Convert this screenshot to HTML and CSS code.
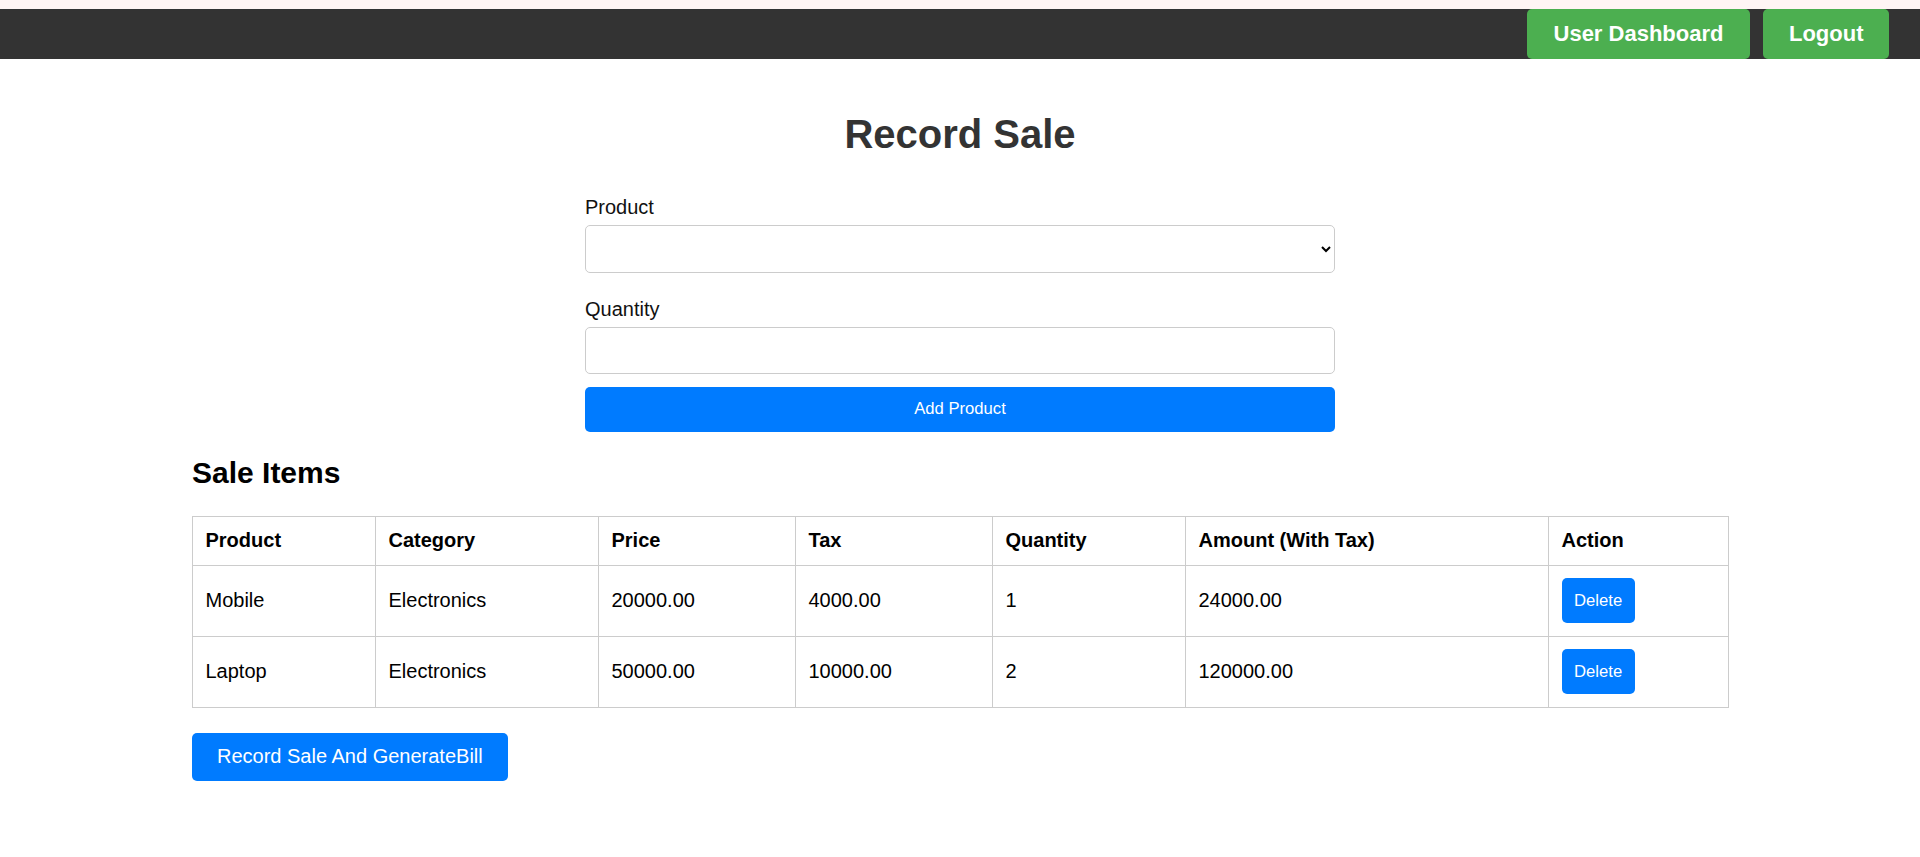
FILE: index.html
```html
<!DOCTYPE html>
<html lang="en">
<head>
<meta charset="utf-8">
<title>Record Sale</title>
<link rel="stylesheet" href="styles.css">
</head>
<body>
<div class="topstrip"></div>
<nav class="navbar">
  <div class="nav-actions">
    <a class="nav-btn" href="#">User Dashboard</a>
    <a class="nav-btn nav-btn-logout" href="#">Logout</a>
  </div>
</nav>
<main class="page">
  <h1 class="title">Record Sale</h1>
  <form class="sale-form">
    <div class="field">
      <label class="field-label">Product</label>
      <select class="control control-select"><option></option></select>
    </div>
    <div class="field field-last">
      <label class="field-label">Quantity</label>
      <input class="control control-input" type="text">
    </div>
    <button type="button" class="btn-add">Add Product</button>
  </form>
  <section class="items">
    <h2 class="items-title">Sale Items</h2>
    <table class="items-table">
      <colgroup>
        <col class="c1"><col class="c2"><col class="c3"><col class="c4"><col class="c5"><col class="c6"><col class="c7">
      </colgroup>
      <thead>
        <tr><th>Product</th><th>Category</th><th>Price</th><th>Tax</th><th>Quantity</th><th>Amount (With Tax)</th><th>Action</th></tr>
      </thead>
      <tbody>
        <tr><td>Mobile</td><td>Electronics</td><td>20000.00</td><td>4000.00</td><td>1</td><td>24000.00</td><td><button type="button" class="btn-delete">Delete</button></td></tr>
        <tr><td>Laptop</td><td>Electronics</td><td>50000.00</td><td>10000.00</td><td>2</td><td>120000.00</td><td><button type="button" class="btn-delete">Delete</button></td></tr>
      </tbody>
    </table>
    <button type="button" class="btn-record">Record Sale And GenerateBill</button>
  </section>
</main>
</body>
</html>
```
FILE: styles.css
```css
body {
  margin: 0;
  font-family: "Liberation Sans", Arial, sans-serif;
  font-size: 20px;
  color: #000;
  background: #fff;
}

.topstrip {
  height: 9px;
  background: #fff5f4;
}

.navbar {
  background: #333;
  height: 50px;
  display: flex;
  justify-content: flex-end;
  padding-right: 31px;
}

.nav-actions {
  display: flex;
  gap: 13px;
}

.nav-btn {
  display: flex;
  align-items: center;
  padding: 0 27px;
  background: #4caf50;
  color: #fff;
  font-weight: bold;
  font-size: 22px;
  border-radius: 5px;
  text-decoration: none;
}

.nav-btn-logout {
  padding: 0 25.5px;
}

.page {
  width: 1536px;
  margin: 0 auto;
}

.title {
  font-size: 40px;
  line-height: 46px;
  color: #333;
  text-align: center;
  margin: 52px 0 39px;
}

.sale-form {
  width: 750px;
  margin: 0 auto;
  display: flex;
  flex-direction: column;
}

.field {
  display: flex;
  flex-direction: column;
  gap: 6px;
  margin-bottom: 25px;
}

.field-last {
  margin-bottom: 13px;
}

.field-label {
  font-size: 20px;
  line-height: 23px;
  color: #111;
}

.control {
  box-sizing: border-box;
  width: 100%;
  border: 1px solid #ccc;
  border-radius: 5px;
  background: #fff;
  font-family: inherit;
  font-size: 20px;
  padding: 0 12px;
}

.control-select {
  height: 48px;
}

.control-input {
  height: 46.5px;
}

.btn-add {
  height: 45px;
  border: none;
  border-radius: 5px;
  background: #007bff;
  color: #fff;
  font-family: inherit;
  font-size: 16.67px;
}

.items-title {
  font-size: 30px;
  line-height: 34.5px;
  margin: 24.5px 0 25px;
}

.items-table {
  width: 1536px;
  border-collapse: collapse;
  table-layout: fixed;
}

.c1 { width: 183px; }
.c2 { width: 223px; }
.c3 { width: 197px; }
.c4 { width: 197px; }
.c5 { width: 193px; }
.c6 { width: 363px; }
.c7 { width: 180px; }

.items-table th,
.items-table td {
  border: 1px solid #ccc;
  padding: 12.5px;
  text-align: left;
  line-height: 23px;
  font-size: 20px;
}

.items-table th {
  font-weight: bold;
}

.btn-delete {
  display: block;
  height: 45px;
  padding: 0 12.5px;
  border: none;
  border-radius: 5px;
  background: #007bff;
  color: #fff;
  font-family: inherit;
  font-size: 16.67px;
}

.btn-record {
  margin-top: 25px;
  height: 48px;
  padding: 0 25px;
  border: none;
  border-radius: 5px;
  background: #007bff;
  color: #fff;
  font-family: inherit;
  font-size: 20px;
}
```
